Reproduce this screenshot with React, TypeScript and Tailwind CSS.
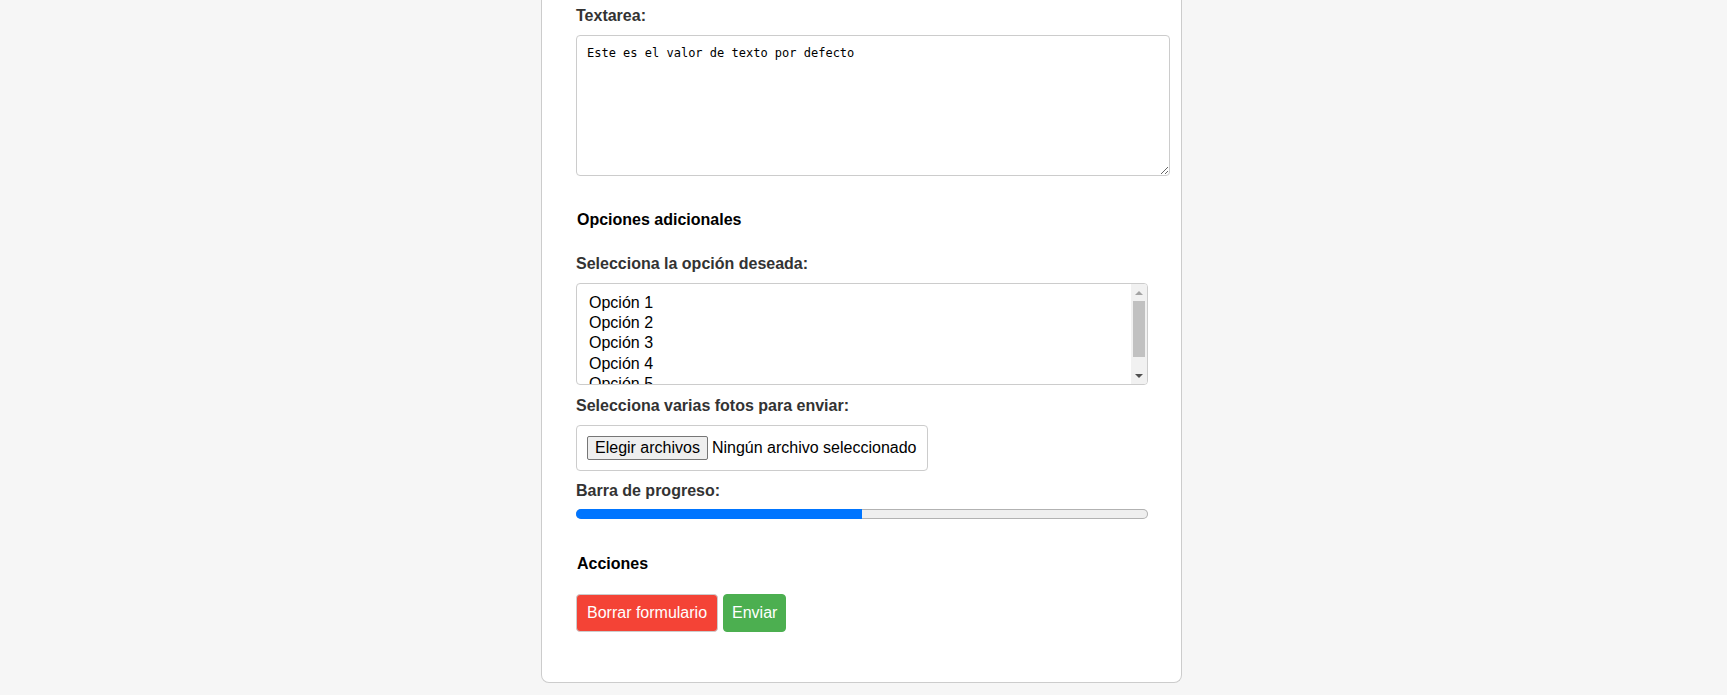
import { useState } from "react";

const FONT = "font-['Liberation_Sans',Arial,sans-serif]";

function Label({ children }: { children: React.ReactNode }) {
  return (
    <label className="block text-[16px] leading-[18px] font-bold text-[#333]">
      {children}
    </label>
  );
}

function Heading({ children }: { children: React.ReactNode }) {
  return (
    <h3 className="pl-px text-[16px] leading-[18px] font-bold text-black">
      {children}
    </h3>
  );
}

// listbox de opciones (select multiple) con su barra de scroll
function OptionList({ options }: { options: string[] }) {
  return (
    <div className="mt-[10px] flex h-[102px] w-full overflow-hidden rounded-[4px] border border-[#ccc] bg-white">
      <div className="flex-1 overflow-hidden pt-[9px] pl-[12px]">
        {options.map((o) => (
          <div key={o} className="h-[20.2px] text-[16px] leading-[19px] text-black">
            {o}
          </div>
        ))}
      </div>
      <div className="flex w-[16px] flex-col bg-[#f1f1f1]">
        <div className="flex h-[15px] items-center justify-center pt-[2px]">
          <span className="h-0 w-0 border-x-[4px] border-b-[4px] border-x-transparent border-b-[#a3a3a3]" />
        </div>
        <div className="flex-1">
          <div className="mx-[2px] mt-[2px] h-[56px] bg-[#c1c1c1]" />
        </div>
        <div className="flex h-[15px] items-center justify-center pb-[2px]">
          <span className="h-0 w-0 border-x-[4px] border-t-[4px] border-x-transparent border-t-[#505050]" />
        </div>
      </div>
    </div>
  );
}

export default function App() {
  const [text, setText] = useState("Este es el valor de texto por defecto");
  const progress = 50;
  const options = ["Opción 1", "Opción 2", "Opción 3", "Opción 4", "Opción 5"];

  return (
    <div className={`min-h-screen bg-[#f6f6f6] pr-[4px] ${FONT}`}>
      <div className="mx-auto w-[641px] rounded-b-[8px] border-x border-b border-[#ccc] bg-white pt-[7px] pr-[33px] pb-[50px] pl-[34px]">
        <Label>Textarea:</Label>
        <textarea
          value={text}
          onChange={(e) => setText(e.target.value)}
          className="mt-[10px] block h-[141px] w-[594px] rounded-[4px] border border-[#ccc] bg-white p-[10px] font-['DejaVu_Sans_Mono',monospace] text-[12px] leading-[15px] text-black outline-none"
        />

        <div className="mt-[35px]">
          <Heading>Opciones adicionales</Heading>
        </div>

        <div className="mt-[26px]">
          <Label>Selecciona la opción deseada:</Label>
        </div>
        <OptionList options={options} />

        <div className="mt-[12px]">
          <Label>Selecciona varias fotos para enviar:</Label>
        </div>
        <div className="mt-[10px] flex w-fit items-center rounded-[4px] border border-[#ccc] p-[10px]">
          <button className="flex h-[24px] items-center rounded-[2px] border border-[#767676] bg-[#efefef] px-[7px] text-[16px] text-black">
            Elegir archivos
          </button>
          <span className="ml-[4px] text-[16px] leading-[18px] text-black">
            Ningún archivo seleccionado
          </span>
        </div>

        <div className="mt-[11px]">
          <Label>Barra de progreso:</Label>
        </div>
        <div className="mt-[9px] h-[10px] w-full overflow-hidden rounded-full bg-[#efefef] ring-1 ring-[#b2b2b2] ring-inset">
          <div className="h-full bg-[#0075ff]" style={{ width: `${progress}%` }} />
        </div>

        <div className="mt-[36px]">
          <Heading>Acciones</Heading>
        </div>
        <div className="mt-[21px] flex gap-[5px]">
          <button className="rounded-[4px] border border-[#ccc] bg-[#f44336] px-[10px] py-[9px] text-[16px] leading-[18px] text-white">
            Borrar formulario
          </button>
          <button className="rounded-[4px] border border-[#4caf50] bg-[#4caf50] px-[8px] py-[9px] text-[16px] leading-[18px] text-white">
            Enviar
          </button>
        </div>
      </div>
    </div>
  );
}
